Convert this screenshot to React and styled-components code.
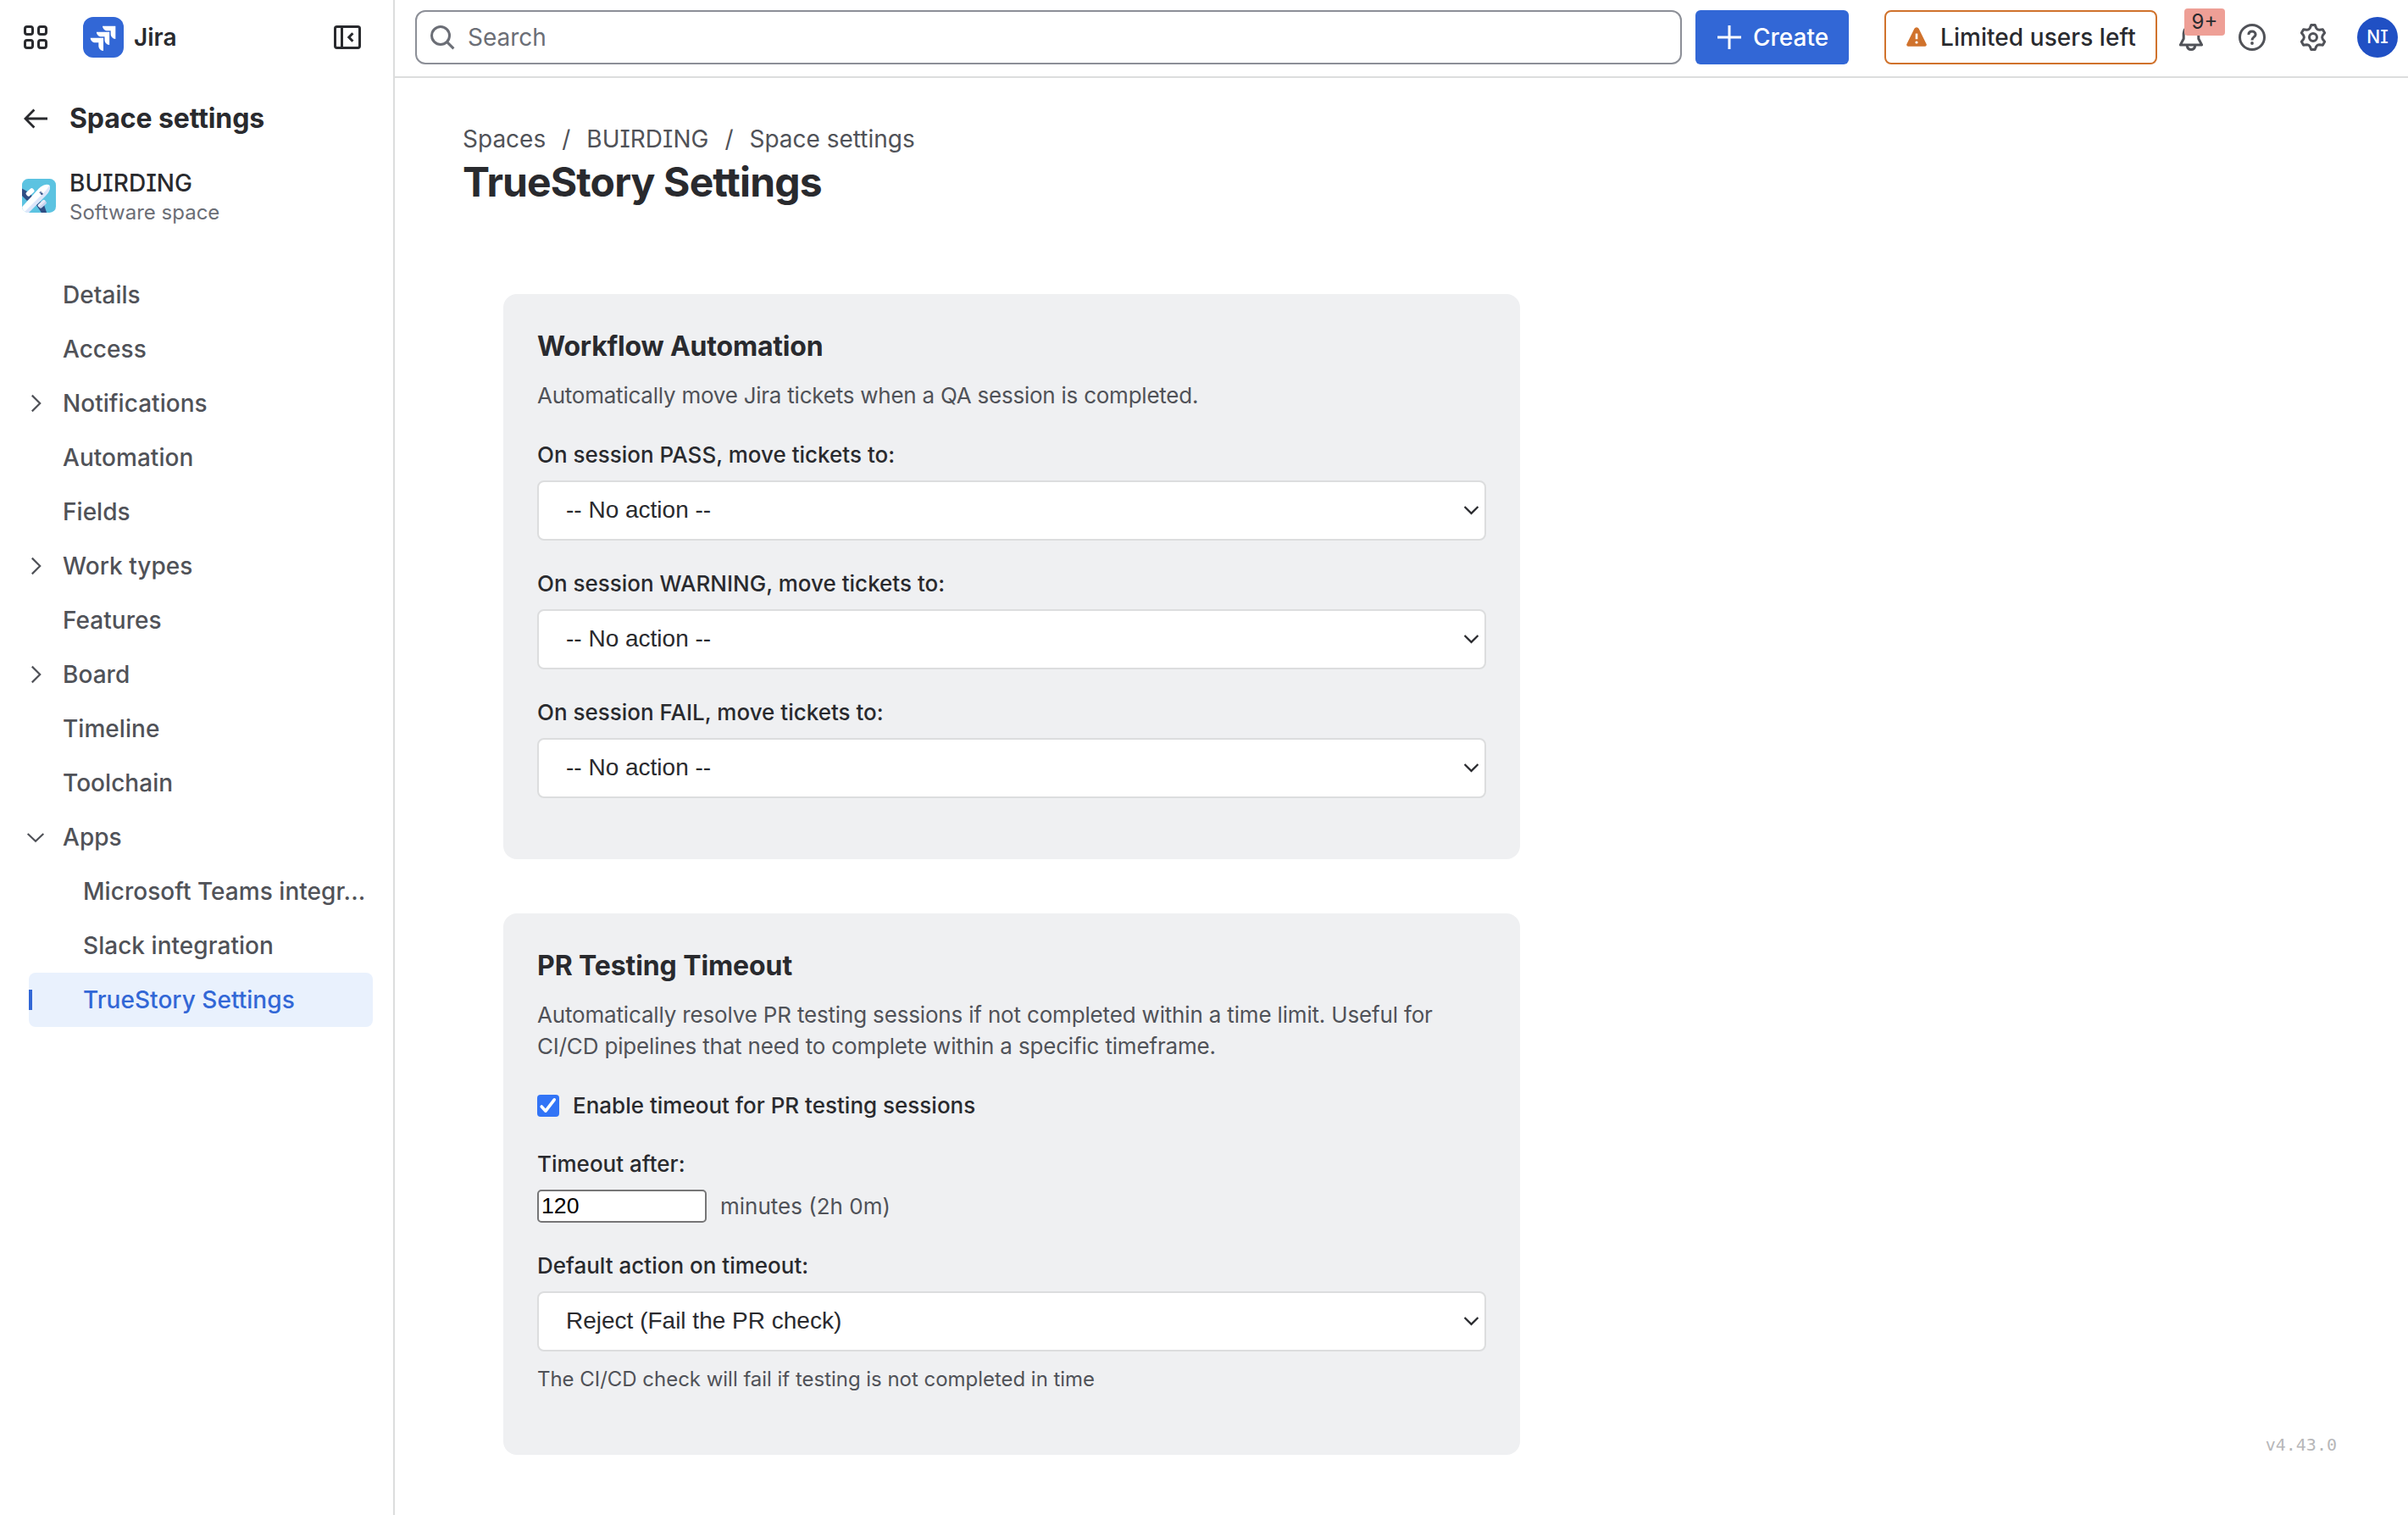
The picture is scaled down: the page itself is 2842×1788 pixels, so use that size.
import React from 'react';
import styled, { createGlobalStyle, css } from 'styled-components';

const color = {
  text: '#292a2e',
  subtle: '#505258',
  subtlest: '#6b6e76',
  line: '#dcdddd',
  blue: '#3267d6',
  orange: '#d0722c',
};

const GlobalStyle = createGlobalStyle`
  * { box-sizing: border-box; }
  body {
    margin: 0;
    background: #fff;
    color: ${color.text};
    font-family: Inter, "Liberation Sans", sans-serif;
    font-size: 28px;
  }
  svg { display: block; flex: none; }
`;

const serifCapitals = css`
  font-feature-settings: "cv08";
`;

const Page = styled.div`
  display: flex;
  width: 2842px;
  height: 1788px;
  overflow: hidden;
`;

/* Sidebar */

const Sidebar = styled.aside`
  display: flex;
  flex-direction: column;
  flex: none;
  width: 466px;
  border-right: 2px solid ${color.line};
`;

const SidebarTop = styled.div`
  display: flex;
  align-items: center;
  height: 88px;
  padding: 0 38px 0 26px;
`;

const Product = styled.div`
  display: flex;
  align-items: center;
  gap: 12px;
  flex: 1;
  margin-left: 40px;
  line-height: 40px;
  font-weight: 600;
`;

const SettingsTitle = styled.div`
  display: flex;
  align-items: center;
  gap: 24px;
  height: 44px;
  margin-top: 30px;
  padding-left: 26px;
  font-size: 32px;
  font-weight: 653;
  line-height: 44px;
  letter-spacing: -0.1px;
`;

const SpaceCard = styled.div`
  display: flex;
  align-items: center;
  gap: 16px;
  margin-top: 34px;
  padding-left: 26px;
`;

const SpaceName = styled.div`
  font-weight: 500;
  line-height: 40px;
  ${serifCapitals}
`;

const SpaceKind = styled.div`
  font-size: 24px;
  line-height: 30px;
  color: ${color.subtlest};
`;

const Menu = styled.nav`
  display: flex;
  flex-direction: column;
  margin-top: 50px;
  padding: 0 24px 0 34px;
`;

const MenuItem = styled.div`
  display: flex;
  align-items: center;
  position: relative;
  height: 64px;
  padding-right: 8px;
  padding-left: ${(p) => (p.$nested ? 64 : 0)}px;
  border-radius: 8px;
  font-weight: 500;
  color: ${(p) => (p.$selected ? color.blue : color.subtle)};
  background: ${(p) => (p.$selected ? '#e9f1fd' : 'transparent')};
`;

const MenuMarker = styled.span`
  flex: none;
  width: 40px;
`;

const SelectedBar = styled.span`
  position: absolute;
  left: 0;
  top: 20px;
  width: 4px;
  height: 24px;
  background: ${color.blue};
`;

const MenuText = styled.span`
  white-space: nowrap;
  line-height: 40px;
  letter-spacing: 0.04px;
`;

/* Top bar */

const Main = styled.div`
  display: flex;
  flex-direction: column;
  flex: 1;
  min-width: 0;
`;

const TopBar = styled.header`
  display: flex;
  align-items: center;
  flex: none;
  height: 92px;
  padding: 0 12px 4px 24px;
  border-bottom: 2px solid ${color.line};
`;

const SearchBox = styled.div`
  display: flex;
  align-items: center;
  gap: 14px;
  width: 1495px;
  height: 64px;
  margin-top: 2px;
  padding-left: 14px;
  border: 2px solid #8c8f97;
  border-radius: 12px;
  color: ${color.subtlest};
`;

const CreateButton = styled.div`
  display: flex;
  align-items: center;
  gap: 12px;
  width: 181px;
  height: 64px;
  margin: 2px 0 0 16px;
  padding-left: 24px;
  border-radius: 6px;
  background: ${color.blue};
  color: #fff;
  font-weight: 500;
`;

const LimitButton = styled.div`
  display: flex;
  align-items: center;
  gap: 16px;
  width: 322px;
  height: 64px;
  margin: 2px 0 0 42px;
  padding-left: 24px;
  border: 2px solid ${color.orange};
  border-radius: 8px;
  font-weight: 500;
  letter-spacing: 0.06px;
  white-space: nowrap;
`;

const TopIcons = styled.div`
  display: flex;
  align-items: center;
  gap: 40px;
  margin: 2px 0 0 24px;
  color: ${color.subtle};
`;

const BellSlot = styled.div`
  position: relative;
`;

const Badge = styled.span`
  position: absolute;
  left: 8px;
  top: -18px;
  width: 48px;
  height: 32px;
  border-radius: 4px;
  background: #ee9f96;
  color: ${color.text};
  font-size: 24px;
  line-height: 32px;
  text-align: center;
`;

const Avatar = styled.div`
  width: 48px;
  height: 48px;
  margin-left: -4px;
  border-radius: 50%;
  background: #2050c4;
  color: #fff;
  font-size: 21px;
  font-weight: 500;
  line-height: 47px;
  text-align: center;
  ${serifCapitals}
`;

/* Page body */

const Heading = styled.div`
  padding: 52px 0 0 80px;
`;

const Crumbs = styled.div`
  display: flex;
  gap: 19px;
  line-height: 40px;
  color: ${color.subtle};
  ${serifCapitals}
`;

const PageTitle = styled.h1`
  margin: 3px 0 0;
  font-size: 48px;
  font-weight: 653;
  line-height: 56px;
  letter-spacing: -0.88px;
`;

const Body = styled.div`
  display: flex;
  justify-content: space-between;
  align-items: flex-end;
  padding: 104px 84px 0 128px;
`;

const Cards = styled.div`
  display: flex;
  flex-direction: column;
  gap: 64px;
  width: 1200px;
`;

const Card = styled.section`
  padding: 40px;
  border-radius: 16px;
  background: #eff0f2;
  font-size: 26px;
`;

const CardTitle = styled.h2`
  margin: 0 0 17px;
  font-size: 32px;
  font-weight: 653;
  line-height: 44px;
  letter-spacing: ${(p) => p.$tracking}px;
`;

const CardText = styled.p`
  margin: 0 0 33px;
  line-height: 37.14px;
  letter-spacing: ${(p) => p.$tracking}px;
  color: ${color.subtle};
`;

const Field = styled.div`
  margin-bottom: 32px;
`;

const Label = styled.div`
  margin-bottom: 12px;
  font-weight: 500;
  line-height: 37px;
`;

const SelectBox = styled.div`
  display: flex;
  align-items: center;
  justify-content: space-between;
  height: 71px;
  padding: 0 7px 1px 32px;
  border: 2px solid #dcddde;
  border-radius: 8px;
  background: #fff;
  font-family: "Liberation Sans", Arial, sans-serif;
  font-size: 28px;
`;

const CheckRow = styled.div`
  display: flex;
  align-items: center;
  gap: 16px;
  margin-bottom: 32px;
  font-weight: 500;
  line-height: 37px;
`;

const CheckBox = styled.span`
  width: 26px;
  height: 26px;
  border-radius: 4px;
  background: #3274f6;
`;

const MinutesRow = styled.div`
  display: flex;
  align-items: center;
  gap: 16px;
  height: 39px;
  color: ${color.subtle};
`;

const MinutesInput = styled.div`
  width: 200px;
  height: 39px;
  padding-left: 3px;
  border: 2px solid #767677;
  border-radius: 5px;
  background: #fff;
  color: #000;
  font-family: "Liberation Sans", Arial, sans-serif;
  font-size: 26.67px;
  line-height: 34px;
`;

const Hint = styled.div`
  margin-top: 16px;
  font-size: 24px;
  line-height: 34px;
  letter-spacing: -0.03px;
  color: ${color.subtle};
`;

const Version = styled.div`
  font-family: "DejaVu Sans Mono", monospace;
  font-size: 20px;
  line-height: 24px;
  color: #b7b7b9;
`;

/* Icons: a 16-unit grid drawn at 32px */

const Icon = ({ children, w = 1.5 }) => (
  <svg width="32" height="32" viewBox="0 0 16 16" fill="none" stroke="currentColor" strokeWidth={w}>
    {children}
  </svg>
);

const AppsIcon = () => (
  <Icon>
    {[[1.75, 1.75], [9.75, 1.75], [1.75, 9.75], [9.75, 9.75]].map(([x, y]) => (
      <rect key={`${x}-${y}`} x={x} y={y} width="4.5" height="4.5" rx="1.25" />
    ))}
  </Icon>
);

const CollapseIcon = () => (
  <Icon>
    <rect x=".75" y="1.75" width="14.5" height="12.5" rx="1.1" />
    <path d="M4.75 1.75v12.5M11.2 5.6 8.9 8l2.3 2.4" />
  </Icon>
);

const BackIcon = () => (
  <Icon w={1.4}>
    <path d="M15 8H2M7.2 2.8 2 8l5.2 5.2" />
  </Icon>
);

const SearchIcon = () => (
  <Icon>
    <circle cx="7" cy="7" r="5.25" />
    <path d="m10.8 10.8 3.9 3.9" />
  </Icon>
);

const PlusIcon = () => (
  <Icon>
    <path d="M8 1v14M1 8h14" />
  </Icon>
);

const BellIcon = () => (
  <Icon>
    <path d="M1.7 12.45 3.6 8.9V5.6a4.4 4.4 0 0 1 8.8 0v3.3l1.9 3.55z" strokeLinejoin="round" />
    <path d="M5.6 12.9c.2 1.5 1.1 2.35 2.4 2.35s2.2-.85 2.4-2.35" />
  </Icon>
);

const HelpIcon = () => (
  <Icon>
    <circle cx="8" cy="8" r="7.25" />
    <path d="M5.95 6.5c0-1.25.85-2 2.05-2s2.05.75 2.05 1.85C10.05 7.8 8 7.9 8 9.7" />
    <circle cx="8" cy="11.5" r=".95" fill="currentColor" stroke="none" />
  </Icon>
);

const gearPath = (() => {
  const at = (r, deg) => {
    const a = (deg * Math.PI) / 180;
    return `${(8 + r * Math.cos(a)).toFixed(2)} ${(8 + r * Math.sin(a)).toFixed(2)}`;
  };
  const parts = [];
  for (let i = 0; i < 6; i += 1) {
    const c = -90 + i * 60;
    parts.push(`${i === 0 ? 'M' : 'L'}${at(7.3, c - 9)}L${at(7.3, c + 9)}L${at(5.75, c + 19)}Q${at(5.0, c + 30)} ${at(5.75, c + 41)}`);
  }
  return `${parts.join('')}Z`;
})();

const GearIcon = () => (
  <Icon>
    <path d={gearPath} strokeLinejoin="round" />
    <circle cx="8" cy="8" r="2.25" />
  </Icon>
);

const WarningIcon = () => (
  <svg width="24" height="24" viewBox="0 0 24 24">
    <path d="M9.4 1.8a2.95 2.95 0 0 1 5.2 0l9 18.1a2 2 0 0 1-1.8 2.9H2.2a2 2 0 0 1-1.8-2.9z" fill={color.orange} />
    <path d="M12 7.6v6.6" stroke="#fff" strokeWidth="2.6" />
    <circle cx="12" cy="18" r="1.6" fill="#fff" />
  </svg>
);

const MenuChevron = ({ open }) => (
  <svg width="40" height="32" viewBox="0 0 40 32" overflow="visible" fill="none" stroke="currentColor" strokeWidth="2.2">
    {open ? <path d="M-1.3 12 8 20.8 17.3 12" /> : <path d="M3.8 6.6 13.2 16l-9.400 9.400" />}
  </svg>
);

const SelectChevron = () => (
  <svg width="17" height="12" viewBox="0 0 17 12" fill="none" stroke={color.text} strokeWidth="2.2">
    <path d="m.6 2 7.9 7.9L16.4 2" />
  </svg>
);

const Tick = () => (
  <svg width="26" height="26" viewBox="0 0 26 26" fill="none" stroke="#fff" strokeWidth="3.6">
    <path d="m5.2 14 4.8 5.2L20.2 5.8" strokeLinecap="round" strokeLinejoin="round" />
  </svg>
);

const JiraLogo = () => (
  <svg width="48" height="48" viewBox="0 0 144 144">
    <rect width="144" height="144" rx="36" fill={color.blue} />
    {[[0, 0], [-21.5, 21], [-43, 42]].map(([x, y]) => (
      <path
        key={x}
        transform={`translate(${x} ${y})`}
        d="M69 32h46v46c-10-1-17-8-17-18V49H87c-10 0-17-7-18-17z"
        fill="#fff"
      />
    ))}
  </svg>
);

const SpaceAvatar = () => (
  <svg width="40" height="40" viewBox="0 0 120 120">
    <defs>
      <clipPath id="space-avatar">
        <rect width="120" height="120" rx="22" />
      </clipPath>
    </defs>
    <g clipPath="url(#space-avatar)">
      <rect width="120" height="120" fill="#5cc3e1" />
      <path d="M-4 32 30 52 36 64 18 78-4 56z" fill="#2f4e84" />
      <path d="M50 92 66 80 78 92 88 122H70z" fill="#2f4e84" />
      <rect x="13" y="39" width="32" height="17" rx="6" transform="rotate(-42 29 48)" fill="#fff" />
      <rect x="56" y="81" width="32" height="17" rx="6" transform="rotate(-42 72 90)" fill="#c9d3ee" />
      <rect x="56" y="81" width="32" height="9" rx="4" transform="rotate(-42 72 90)" fill="#e8ecf8" />
      <path d="M-6 106 60 34C74 20 90 18 96 22c6 6 2 22-12 36L14 126z" fill="#fff" />
      <path d="M6 120 84 42 97 24c5 8 0 22-13 36L18 126z" fill="#dde6fa" />
      <path d="m61 48 6-3 8 9-6 4z" fill="#2f4e84" />
      <path d="m63 53 8-7" stroke="#dde6fa" strokeWidth="2" />
    </g>
  </svg>
);

const menu = [
  { text: 'Details' },
  { text: 'Access' },
  { text: 'Notifications', chevron: 'closed' },
  { text: 'Automation' },
  { text: 'Fields' },
  { text: 'Work types', chevron: 'closed' },
  { text: 'Features' },
  { text: 'Board', chevron: 'closed' },
  { text: 'Timeline' },
  { text: 'Toolchain' },
  { text: 'Apps', chevron: 'open' },
  { text: 'Microsoft Teams integr...', nested: true },
  { text: 'Slack integration', nested: true },
  { text: 'TrueStory Settings', nested: true, selected: true },
];

const Select = ({ label, value, children }) => (
  <Field>
    <Label>{label}</Label>
    <SelectBox>
      {value}
      <SelectChevron />
    </SelectBox>
    {children}
  </Field>
);

export default function App() {
  return (
    <Page>
      <GlobalStyle />
      <Sidebar>
        <SidebarTop>
          <AppsIcon />
          <Product>
            <JiraLogo />
            Jira
          </Product>
          <CollapseIcon />
        </SidebarTop>
        <SettingsTitle>
          <BackIcon />
          Space settings
        </SettingsTitle>
        <SpaceCard>
          <SpaceAvatar />
          <div>
            <SpaceName>BUIRDING</SpaceName>
            <SpaceKind>Software space</SpaceKind>
          </div>
        </SpaceCard>
        <Menu>
          {menu.map((item) => (
            <MenuItem key={item.text} $nested={item.nested} $selected={item.selected}>
              {item.selected && <SelectedBar />}
              {!item.nested && (
                <MenuMarker>{item.chevron && <MenuChevron open={item.chevron === 'open'} />}</MenuMarker>
              )}
              <MenuText>{item.text}</MenuText>
            </MenuItem>
          ))}
        </Menu>
      </Sidebar>
      <Main>
        <TopBar>
          <SearchBox>
            <SearchIcon />
            Search
          </SearchBox>
          <CreateButton>
            <PlusIcon />
            Create
          </CreateButton>
          <LimitButton>
            <WarningIcon />
            Limited users left
          </LimitButton>
          <TopIcons>
            <BellSlot>
              <BellIcon />
              <Badge>9+</Badge>
            </BellSlot>
            <HelpIcon />
            <GearIcon />
            <Avatar>NI</Avatar>
          </TopIcons>
        </TopBar>
        <Heading>
          <Crumbs>
            <span>Spaces</span>
            <span>/</span>
            <span>BUIRDING</span>
            <span>/</span>
            <span>Space settings</span>
          </Crumbs>
          <PageTitle>TrueStory Settings</PageTitle>
        </Heading>
        <Body>
          <Cards>
            <Card>
              <CardTitle $tracking={-0.2}>Workflow Automation</CardTitle>
              <CardText $tracking={-0.235}>
                Automatically move Jira tickets when a QA session is completed.
              </CardText>
              <Select label="On session PASS, move tickets to:" value="-- No action --" />
              <Select label="On session WARNING, move tickets to:" value="-- No action --" />
              <Select label="On session FAIL, move tickets to:" value="-- No action --" />
            </Card>
            <Card>
              <CardTitle $tracking={-0.1}>PR Testing Timeout</CardTitle>
              <CardText $tracking={-0.17}>
                Automatically resolve PR testing sessions if not completed within a time limit. Useful for
                CI/CD pipelines that need to complete within a specific timeframe.
              </CardText>
              <CheckRow>
                <CheckBox>
                  <Tick />
                </CheckBox>
                Enable timeout for PR testing sessions
              </CheckRow>
              <Field>
                <Label>Timeout after:</Label>
                <MinutesRow>
                  <MinutesInput>120</MinutesInput>
                  minutes (2h 0m)
                </MinutesRow>
              </Field>
              <Select label="Default action on timeout:" value="Reject (Fail the PR check)">
                <Hint>The CI/CD check will fail if testing is not completed in time</Hint>
              </Select>
            </Card>
          </Cards>
          <Version>v4.43.0</Version>
        </Body>
      </Main>
    </Page>
  );
}
